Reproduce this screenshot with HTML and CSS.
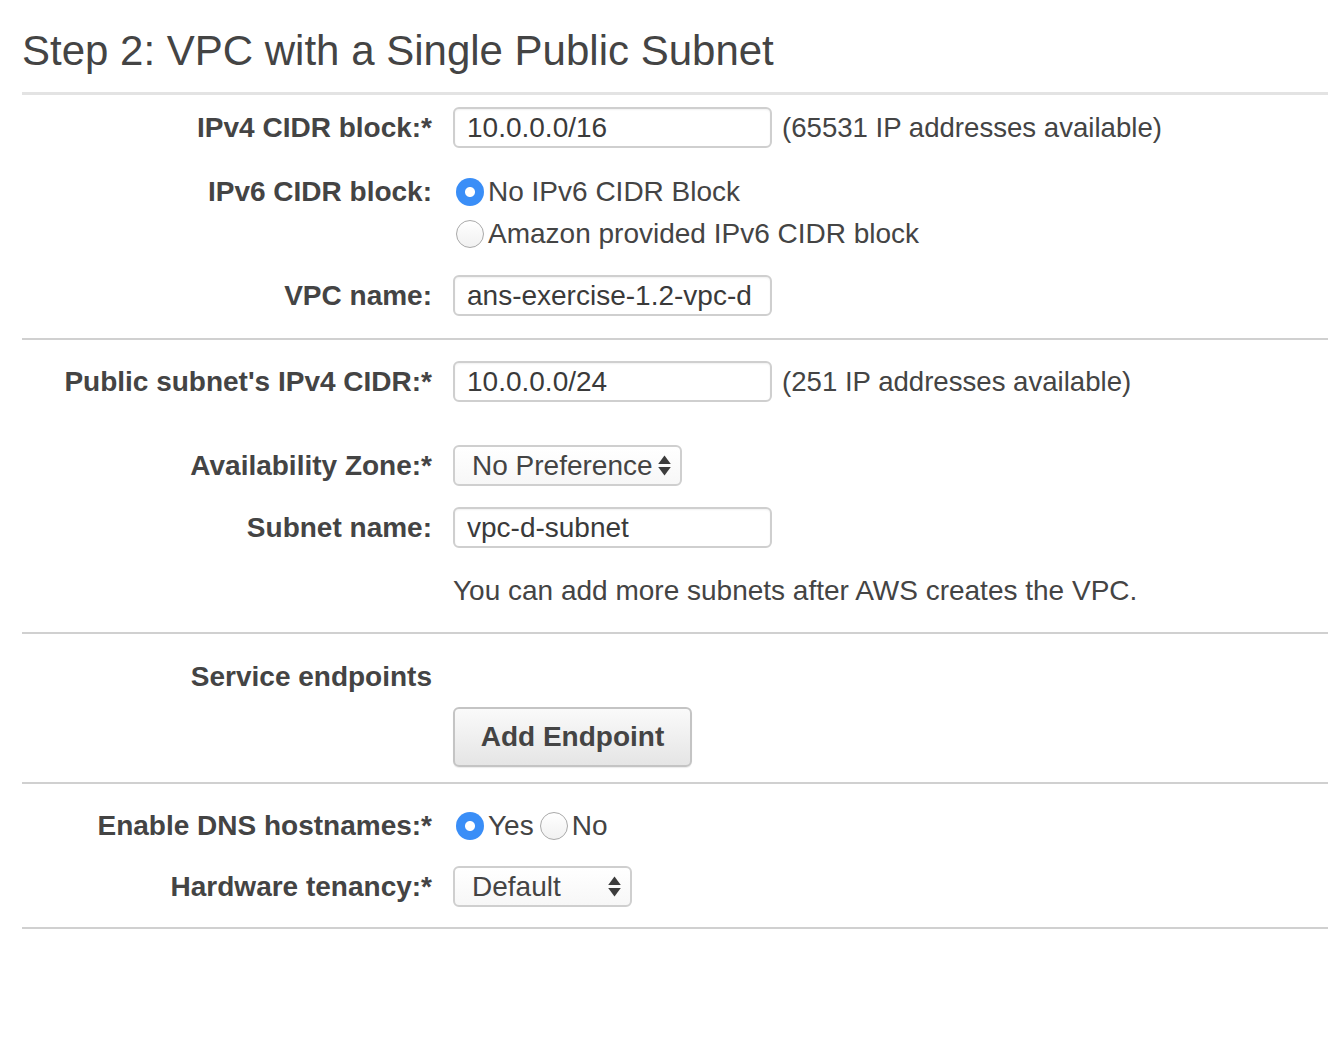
FILE: index.html
```html
<!DOCTYPE html>
<html>
<head>
<meta charset="utf-8">
<link rel="stylesheet" href="styles.css">
</head>
<body>
<div class="page">
  <h1 class="title">Step 2: VPC with a Single Public Subnet</h1>

  <div class="section section-head">
    <div class="row row-ipv4">
      <div class="lbl">IPv4 CIDR block:*</div>
      <div class="ctl"><input class="field" type="text" value="10.0.0.0/16"><span class="note">(65531 IP addresses available)</span></div>
    </div>
    <div class="row row-ipv6 row-top">
      <div class="lbl lbl-radio">IPv6 CIDR block:</div>
      <div class="ctl ctl-col">
        <div class="radio-line"><span class="radio checked"></span><span class="rtext">No IPv6 CIDR Block</span></div>
        <div class="radio-line"><span class="radio"></span><span class="rtext">Amazon provided IPv6 CIDR block</span></div>
      </div>
    </div>
    <div class="row row-vpcname">
      <div class="lbl">VPC name:</div>
      <div class="ctl"><input class="field" type="text" value="ans-exercise-1.2-vpc-d"></div>
    </div>
  </div>

  <div class="section section-subnet">
    <div class="row row-subnet">
      <div class="lbl">Public subnet's IPv4 CIDR:*</div>
      <div class="ctl"><input class="field" type="text" value="10.0.0.0/24"><span class="note">(251 IP addresses available)</span></div>
    </div>
    <div class="row row-az">
      <div class="lbl">Availability Zone:*</div>
      <div class="ctl">
        <div class="select select-az"><span class="select-text">No Preference</span>
          <svg class="arrows" width="13" height="21" viewBox="0 0 13 21"><path d="M6.5 0.5 L12.8 9 L0.2 9 Z" fill="#3c3c3c"/><path d="M6.5 20.5 L12.8 12 L0.2 12 Z" fill="#3c3c3c"/></svg>
        </div>
      </div>
    </div>
    <div class="row row-subname">
      <div class="lbl">Subnet name:</div>
      <div class="ctl"><input class="field" type="text" value="vpc-d-subnet"></div>
    </div>
    <div class="row row-help">
      <div class="lbl"></div>
      <div class="ctl help">You can add more subnets after AWS creates the VPC.</div>
    </div>
  </div>

  <div class="section section-endpoints">
    <div class="row row-endpoints">
      <div class="lbl">Service endpoints</div>
      <div class="ctl"></div>
    </div>
    <div class="row row-button">
      <div class="lbl"></div>
      <div class="ctl"><button class="btn" type="button">Add Endpoint</button></div>
    </div>
  </div>

  <div class="section section-dns">
    <div class="row row-dns">
      <div class="lbl">Enable DNS hostnames:*</div>
      <div class="ctl">
        <span class="radio checked"></span><span class="rtext">Yes</span>
        <span class="radio radio-next"></span><span class="rtext">No</span>
      </div>
    </div>
    <div class="row row-tenancy">
      <div class="lbl">Hardware tenancy:*</div>
      <div class="ctl">
        <div class="select select-ten"><span class="select-text">Default</span>
          <svg class="arrows" width="13" height="21" viewBox="0 0 13 21"><path d="M6.5 0.5 L12.8 9 L0.2 9 Z" fill="#3c3c3c"/><path d="M6.5 20.5 L12.8 12 L0.2 12 Z" fill="#3c3c3c"/></svg>
        </div>
      </div>
    </div>
  </div>
</div>
</body>
</html>
```

FILE: styles.css
```css
html, body {
  margin: 0;
  padding: 0;
  background: #ffffff;
}

body {
  font-family: "Liberation Sans", Arial, Helvetica, sans-serif;
  color: #444444;
  font-size: 28px;
}

.page {
  padding-left: 22px;
}

.title {
  margin: 27px 0 17px 0;
  font-size: 42px;
  line-height: 48px;
  font-weight: normal;
  color: #444444;
}

.section {
  border-top: 2px solid #d0d0d0;
}

.section-head {
  border-top: 3px solid #e3e3e3;
  padding-bottom: 22px;
}

.section-subnet {
  padding-bottom: 25px;
}

.section-endpoints {
  padding-bottom: 15px;
}

.section-dns {
  padding-bottom: 20px;
  border-bottom: 2px solid #d0d0d0;
}

.row {
  display: grid;
  grid-template-columns: 410px 1fr;
  column-gap: 21px;
  align-items: center;
}

.row-top {
  align-items: start;
}

.lbl {
  font-weight: bold;
  text-align: right;
  line-height: 32px;
  color: #444444;
}

.lbl-radio {
  line-height: 42px;
}

.ctl {
  display: flex;
  align-items: center;
  min-height: 32px;
}

.ctl-col {
  flex-direction: column;
  align-items: flex-start;
}

.row-ipv4 { margin-top: 12px; }
.row-ipv6 { margin-top: 23px; }
.row-vpcname { margin-top: 20px; }
.row-subnet { margin-top: 21px; }
.row-az { margin-top: 43px; }
.row-subname { margin-top: 21px; }
.row-help { margin-top: 27px; }
.row-endpoints { margin-top: 27px; }
.row-button { margin-top: 14px; }
.row-dns { margin-top: 21px; height: 42px; }
.row-tenancy { margin-top: 19px; }

.field {
  box-sizing: border-box;
  width: 319px;
  height: 41px;
  margin: 0;
  padding: 0 0 0 12px;
  border: 2px solid #cfcfcf;
  border-radius: 6px;
  background: #ffffff;
  font-family: "Liberation Sans", Arial, Helvetica, sans-serif;
  font-size: 28px;
  color: #3a3a3a;
  outline: none;
  box-shadow: inset 0 1px 2px rgba(0,0,0,0.06);
}

.note {
  margin-left: 10px;
  line-height: 32px;
  font-size: 27.6px;
  color: #444444;
}

.radio-line {
  display: flex;
  align-items: center;
  height: 42px;
}

.radio {
  box-sizing: border-box;
  display: inline-block;
  width: 28px;
  height: 28px;
  margin: 0 4px 0 3px;
  border-radius: 50%;
  border: 1.5px solid #a9a9a9;
  background: linear-gradient(#ffffff, #f1f1f1);
  flex: none;
}

.radio.checked {
  border: none;
  background: radial-gradient(circle, #ffffff 0, #ffffff 4.5px, #3a8ef7 5.5px);
}

.radio-next {
  margin-left: 6px;
}

.rtext {
  line-height: 32px;
  color: #444444;
}

.select {
  box-sizing: border-box;
  height: 41px;
  display: flex;
  align-items: center;
  justify-content: space-between;
  padding: 0 9px 0 17px;
  border: 2px solid #cfcfcf;
  border-radius: 6px;
  background: linear-gradient(#ffffff, #f7f7f7);
  color: #444444;
}

.select-az { width: 229px; }
.select-ten { width: 179px; }

.select-text {
  line-height: 32px;
}

.arrows {
  display: block;
  flex: none;
}

.help {
  line-height: 32px;
  color: #444444;
}

.btn {
  box-sizing: border-box;
  width: 239px;
  height: 60px;
  margin: 0;
  padding: 0;
  border: 2px solid #c4c4c4;
  border-radius: 6px;
  background: linear-gradient(#fafafa, #e5e5e5);
  font-family: "Liberation Sans", Arial, Helvetica, sans-serif;
  font-size: 28px;
  font-weight: bold;
  color: #444444;
  box-shadow: 0 1px 1px rgba(0,0,0,0.08);
}
```
